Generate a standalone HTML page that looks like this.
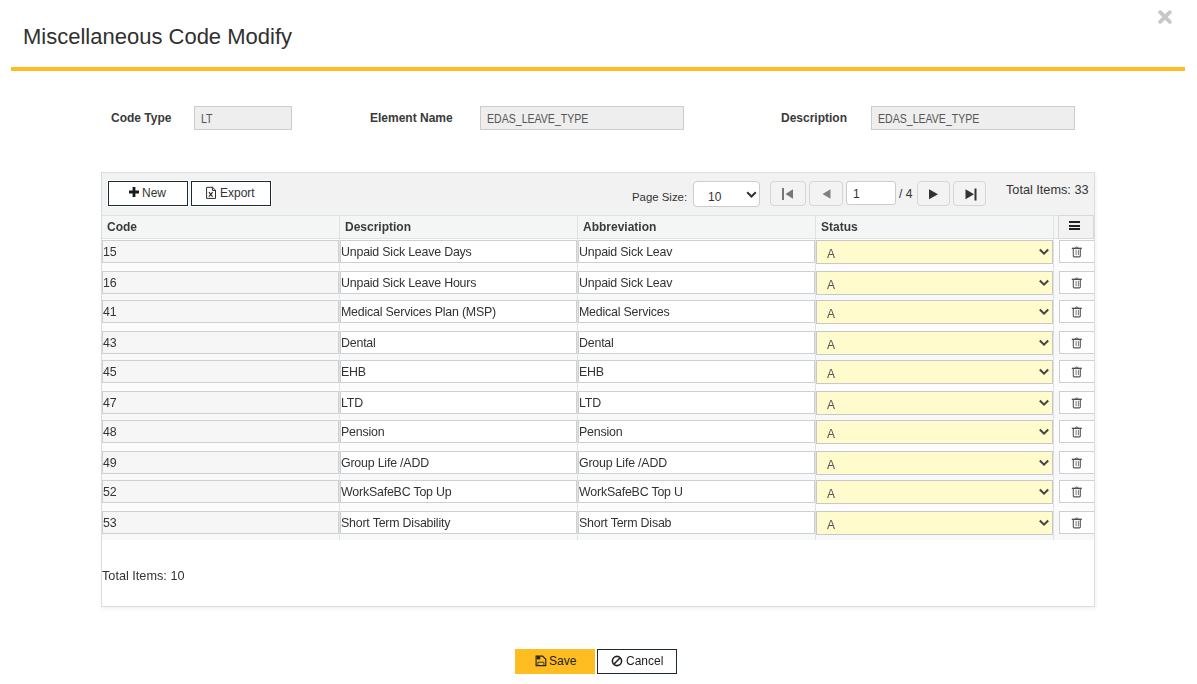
<!DOCTYPE html>
<html><head><meta charset="utf-8">
<style>
*{box-sizing:border-box;margin:0;padding:0}
html,body{width:1197px;height:684px;overflow:hidden;background:#fff;font-family:"Liberation Sans",sans-serif;color:#333}
.a{position:absolute;white-space:nowrap}
.t{line-height:16px;font-size:12px}
.lbl{position:absolute;white-space:nowrap;font-weight:bold;font-size:12px;line-height:16px;color:#3a3a3a}
.inp{position:absolute;background:#eee;border:1px solid #ccc;height:24px}
.inp span{position:absolute;left:6px;top:4px;font-size:12px;line-height:16px;color:#555;transform:scaleX(0.88);transform-origin:0 0}
.btn{position:absolute;border:1px solid #1b2a33;background:#fff;height:25px;box-shadow:0 0 0 1px #fff}
.hdr{position:absolute;top:215px;height:24px;background:#f4f6f6;border-top:1px solid #dce3e5;border-bottom:1px solid #dce3e5}
.sep{position:absolute;width:1px;background:#dce3e5}
.cell{position:absolute;height:23px;border:1px solid #cfcfcf;background:#fff}
.cell span{position:absolute;left:0px;top:4px;font-size:12.4px;line-height:14px;letter-spacing:-0.2px;color:#333}
.code{background:#f6f6f6}
.sel{position:absolute;height:24px;border:1px solid #c8c8c8;background:#fffbcc}
.sel span{position:absolute;left:10px;top:6px;font-size:12px;line-height:14px;color:#555}
.del{position:absolute;height:23px;border:1px solid #cfcfcf;border-right:none;background:#fff}
.pbtn{position:absolute;top:181px;height:25px;border:1px solid #d6d6d6;border-radius:4px;background:#f3f3f3}
.pbtn svg{position:absolute;left:0;top:0}
</style></head><body>
<!-- header -->
<div class="a" style="left:23px;top:24px;font-size:22px;line-height:26px;color:#303030">Miscellaneous Code Modify</div>
<svg class="a" style="left:1158px;top:10px" width="14" height="14" viewBox="0 0 14 14"><path d="M2.2 2.2L11.8 11.8M11.8 2.2L2.2 11.8" stroke="#c8c8c8" stroke-width="3.9" stroke-linecap="round"/></svg>
<div class="a" style="left:11px;top:67px;width:1174px;height:4px;background:#ffbd21"></div>

<!-- form -->
<div class="lbl" style="left:111px;top:110px">Code Type</div>
<div class="inp" style="left:194px;top:106px;width:98px"><span>LT</span></div>
<div class="lbl" style="left:370px;top:110px">Element Name</div>
<div class="inp" style="left:480px;top:106px;width:204px"><span>EDAS_LEAVE_TYPE</span></div>
<div class="lbl" style="left:781px;top:110px">Description</div>
<div class="inp" style="left:871px;top:106px;width:204px"><span>EDAS_LEAVE_TYPE</span></div>

<!-- grid -->
<div class="a" style="left:101px;top:172px;width:994px;height:435px;border:1px solid #d9dfe1;background:#fff;box-shadow:1px 2px 4px rgba(0,0,0,0.06)"></div>
<div class="a" style="left:102px;top:173px;width:992px;height:42px;background:#f2f2f2"></div>
<div class="btn" style="left:108px;top:181px;width:80px"><svg class="a" style="left:20px;top:5px" width="10" height="10" viewBox="0 0 10 10"><path d="M5 0V10M0 5H10" stroke="#1a1a1a" stroke-width="2.8"/></svg><span class="a t" style="left:33px;top:3px;color:#333">New</span></div>
<div class="btn" style="left:191px;top:181px;width:80px"><svg class="a" style="left:14px;top:4px" width="11" height="14" viewBox="0 0 11 14"><path d="M0.6 1.3H6.6L9.5 4.2V12.4H0.6Z" fill="none" stroke="#2a2a2a" stroke-width="1"/><path d="M6.4 1.3V4.4H9.5" fill="none" stroke="#2a2a2a" stroke-width="1"/><path d="M2.9 6.2L6.6 10.6M6.6 6.2L2.9 10.6" stroke="#222" stroke-width="1.1"/></svg><span class="a t" style="left:28px;top:3px;color:#333">Export</span></div>
<div class="a" style="left:632px;top:189px;font-size:11.4px;line-height:16px">Page Size:</div>
<div class="a" style="left:693px;top:181px;width:67px;height:26px;border:1px solid #ccc;border-radius:4px;background:#fff"><span class="a t" style="left:14px;top:7px">10</span><svg class="a" style="left:52px;top:9px" width="11" height="8" viewBox="0 0 11 8"><path d="M1.2 1.2L5.5 5.5L9.8 1.2" fill="none" stroke="#333" stroke-width="2"/></svg></div>
<div class="pbtn" style="left:770px;width:36px"><svg width="36" height="25" viewBox="0 0 36 25"><rect x="11" y="6" width="2" height="12" fill="#777"/><path d="M14.5 12L22 7.2V16.8Z" fill="#777"/></svg></div>
<div class="pbtn" style="left:809px;width:34px"><svg width="34" height="25" viewBox="0 0 34 25"><path d="M12.5 12L20.5 7.2V16.8Z" fill="#808080"/></svg></div>
<div class="a" style="left:846px;top:181px;width:50px;height:24px;border:1px solid #ccc;border-radius:3px;background:#fff"><span class="a t" style="left:6px;top:4px">1</span></div>
<div class="a t" style="left:899px;top:186px">/ 4</div>
<div class="pbtn" style="left:917px;width:33px"><svg width="33" height="25" viewBox="0 0 33 25"><path d="M20 12.2L11 7.2V17.2Z" fill="#333"/></svg></div>
<div class="pbtn" style="left:953px;width:33px"><svg width="33" height="25" viewBox="0 0 33 25"><path d="M20 12.2L11.5 7.2V17.2Z" fill="#333"/><rect x="20.5" y="6.5" width="2" height="12" fill="#333"/></svg></div>
<div class="a" style="left:1006px;top:182px;font-size:12.7px;line-height:16px">Total Items: 33</div>

<div style="position:absolute;left:0;top:0;width:1197px;height:684px;will-change:transform">
<div class="hdr" style="left:102px;width:992px"></div>
<div class="lbl" style="left:107px;top:219px">Code</div>
<div class="lbl" style="left:345px;top:219px">Description</div>
<div class="lbl" style="left:583px;top:219px">Abbreviation</div>
<div class="lbl" style="left:821px;top:219px">Status</div>

<div class="a" style="left:102px;top:240px;width:992px;height:31px;background:#fcfcfc"></div>
<div class="cell code" style="left:102px;top:240px;width:237px"><span>15</span></div>
<div class="cell" style="left:340px;top:240px;width:237px"><span>Unpaid Sick Leave Days</span></div>
<div class="cell" style="left:578px;top:240px;width:237px"><span>Unpaid Sick Leav</span></div>
<div class="sel" style="left:816px;top:240px;width:237px"><span>A</span><svg width="12" height="8" viewBox="0 0 12 8" class="a" style="right:2px;top:7px"><path d="M1.8 1.5L6 5.7L10.2 1.5" fill="none" stroke="#444" stroke-width="2"/></svg></div>
<div class="del" style="left:1059px;top:240px;width:35px"><svg width="12" height="12" viewBox="0 0 12 12" class="a" style="left:11px;top:5px"><path d="M3.9 1.9Q5.7 -0.3 7.5 1.9" fill="#ccc" stroke="#777" stroke-width="0.9"/><path d="M0.8 2.3H10.8" stroke="#3a3a3a" stroke-width="1.2"/><path d="M2.3 2.8V10Q2.3 10.9 3.2 10.9H8.4Q9.3 10.9 9.3 10V2.8" fill="none" stroke="#555" stroke-width="1.1"/><path d="M5.1 3.8V9.2M7.4 3.8V9.2" stroke="#777" stroke-width="1"/></svg></div>
<div class="a" style="left:102px;top:271px;width:992px;height:29px;background:#f6f8fa"></div>
<div class="cell code" style="left:102px;top:271px;width:237px"><span>16</span></div>
<div class="cell" style="left:340px;top:271px;width:237px"><span>Unpaid Sick Leave Hours</span></div>
<div class="cell" style="left:578px;top:271px;width:237px"><span>Unpaid Sick Leav</span></div>
<div class="sel" style="left:816px;top:271px;width:237px"><span>A</span><svg width="12" height="8" viewBox="0 0 12 8" class="a" style="right:2px;top:7px"><path d="M1.8 1.5L6 5.7L10.2 1.5" fill="none" stroke="#444" stroke-width="2"/></svg></div>
<div class="del" style="left:1059px;top:271px;width:35px"><svg width="12" height="12" viewBox="0 0 12 12" class="a" style="left:11px;top:5px"><path d="M3.9 1.9Q5.7 -0.3 7.5 1.9" fill="#ccc" stroke="#777" stroke-width="0.9"/><path d="M0.8 2.3H10.8" stroke="#3a3a3a" stroke-width="1.2"/><path d="M2.3 2.8V10Q2.3 10.9 3.2 10.9H8.4Q9.3 10.9 9.3 10V2.8" fill="none" stroke="#555" stroke-width="1.1"/><path d="M5.1 3.8V9.2M7.4 3.8V9.2" stroke="#777" stroke-width="1"/></svg></div>
<div class="a" style="left:102px;top:300px;width:992px;height:31px;background:#fcfcfc"></div>
<div class="cell code" style="left:102px;top:300px;width:237px"><span>41</span></div>
<div class="cell" style="left:340px;top:300px;width:237px"><span>Medical Services Plan (MSP)</span></div>
<div class="cell" style="left:578px;top:300px;width:237px"><span>Medical Services</span></div>
<div class="sel" style="left:816px;top:300px;width:237px"><span>A</span><svg width="12" height="8" viewBox="0 0 12 8" class="a" style="right:2px;top:7px"><path d="M1.8 1.5L6 5.7L10.2 1.5" fill="none" stroke="#444" stroke-width="2"/></svg></div>
<div class="del" style="left:1059px;top:300px;width:35px"><svg width="12" height="12" viewBox="0 0 12 12" class="a" style="left:11px;top:5px"><path d="M3.9 1.9Q5.7 -0.3 7.5 1.9" fill="#ccc" stroke="#777" stroke-width="0.9"/><path d="M0.8 2.3H10.8" stroke="#3a3a3a" stroke-width="1.2"/><path d="M2.3 2.8V10Q2.3 10.9 3.2 10.9H8.4Q9.3 10.9 9.3 10V2.8" fill="none" stroke="#555" stroke-width="1.1"/><path d="M5.1 3.8V9.2M7.4 3.8V9.2" stroke="#777" stroke-width="1"/></svg></div>
<div class="a" style="left:102px;top:331px;width:992px;height:29px;background:#f6f8fa"></div>
<div class="cell code" style="left:102px;top:331px;width:237px"><span>43</span></div>
<div class="cell" style="left:340px;top:331px;width:237px"><span>Dental</span></div>
<div class="cell" style="left:578px;top:331px;width:237px"><span>Dental</span></div>
<div class="sel" style="left:816px;top:331px;width:237px"><span>A</span><svg width="12" height="8" viewBox="0 0 12 8" class="a" style="right:2px;top:7px"><path d="M1.8 1.5L6 5.7L10.2 1.5" fill="none" stroke="#444" stroke-width="2"/></svg></div>
<div class="del" style="left:1059px;top:331px;width:35px"><svg width="12" height="12" viewBox="0 0 12 12" class="a" style="left:11px;top:5px"><path d="M3.9 1.9Q5.7 -0.3 7.5 1.9" fill="#ccc" stroke="#777" stroke-width="0.9"/><path d="M0.8 2.3H10.8" stroke="#3a3a3a" stroke-width="1.2"/><path d="M2.3 2.8V10Q2.3 10.9 3.2 10.9H8.4Q9.3 10.9 9.3 10V2.8" fill="none" stroke="#555" stroke-width="1.1"/><path d="M5.1 3.8V9.2M7.4 3.8V9.2" stroke="#777" stroke-width="1"/></svg></div>
<div class="a" style="left:102px;top:360px;width:992px;height:31px;background:#fcfcfc"></div>
<div class="cell code" style="left:102px;top:360px;width:237px"><span>45</span></div>
<div class="cell" style="left:340px;top:360px;width:237px"><span>EHB</span></div>
<div class="cell" style="left:578px;top:360px;width:237px"><span>EHB</span></div>
<div class="sel" style="left:816px;top:360px;width:237px"><span>A</span><svg width="12" height="8" viewBox="0 0 12 8" class="a" style="right:2px;top:7px"><path d="M1.8 1.5L6 5.7L10.2 1.5" fill="none" stroke="#444" stroke-width="2"/></svg></div>
<div class="del" style="left:1059px;top:360px;width:35px"><svg width="12" height="12" viewBox="0 0 12 12" class="a" style="left:11px;top:5px"><path d="M3.9 1.9Q5.7 -0.3 7.5 1.9" fill="#ccc" stroke="#777" stroke-width="0.9"/><path d="M0.8 2.3H10.8" stroke="#3a3a3a" stroke-width="1.2"/><path d="M2.3 2.8V10Q2.3 10.9 3.2 10.9H8.4Q9.3 10.9 9.3 10V2.8" fill="none" stroke="#555" stroke-width="1.1"/><path d="M5.1 3.8V9.2M7.4 3.8V9.2" stroke="#777" stroke-width="1"/></svg></div>
<div class="a" style="left:102px;top:391px;width:992px;height:29px;background:#f6f8fa"></div>
<div class="cell code" style="left:102px;top:391px;width:237px"><span>47</span></div>
<div class="cell" style="left:340px;top:391px;width:237px"><span>LTD</span></div>
<div class="cell" style="left:578px;top:391px;width:237px"><span>LTD</span></div>
<div class="sel" style="left:816px;top:391px;width:237px"><span>A</span><svg width="12" height="8" viewBox="0 0 12 8" class="a" style="right:2px;top:7px"><path d="M1.8 1.5L6 5.7L10.2 1.5" fill="none" stroke="#444" stroke-width="2"/></svg></div>
<div class="del" style="left:1059px;top:391px;width:35px"><svg width="12" height="12" viewBox="0 0 12 12" class="a" style="left:11px;top:5px"><path d="M3.9 1.9Q5.7 -0.3 7.5 1.9" fill="#ccc" stroke="#777" stroke-width="0.9"/><path d="M0.8 2.3H10.8" stroke="#3a3a3a" stroke-width="1.2"/><path d="M2.3 2.8V10Q2.3 10.9 3.2 10.9H8.4Q9.3 10.9 9.3 10V2.8" fill="none" stroke="#555" stroke-width="1.1"/><path d="M5.1 3.8V9.2M7.4 3.8V9.2" stroke="#777" stroke-width="1"/></svg></div>
<div class="a" style="left:102px;top:420px;width:992px;height:31px;background:#fcfcfc"></div>
<div class="cell code" style="left:102px;top:420px;width:237px"><span>48</span></div>
<div class="cell" style="left:340px;top:420px;width:237px"><span>Pension</span></div>
<div class="cell" style="left:578px;top:420px;width:237px"><span>Pension</span></div>
<div class="sel" style="left:816px;top:420px;width:237px"><span>A</span><svg width="12" height="8" viewBox="0 0 12 8" class="a" style="right:2px;top:7px"><path d="M1.8 1.5L6 5.7L10.2 1.5" fill="none" stroke="#444" stroke-width="2"/></svg></div>
<div class="del" style="left:1059px;top:420px;width:35px"><svg width="12" height="12" viewBox="0 0 12 12" class="a" style="left:11px;top:5px"><path d="M3.9 1.9Q5.7 -0.3 7.5 1.9" fill="#ccc" stroke="#777" stroke-width="0.9"/><path d="M0.8 2.3H10.8" stroke="#3a3a3a" stroke-width="1.2"/><path d="M2.3 2.8V10Q2.3 10.9 3.2 10.9H8.4Q9.3 10.9 9.3 10V2.8" fill="none" stroke="#555" stroke-width="1.1"/><path d="M5.1 3.8V9.2M7.4 3.8V9.2" stroke="#777" stroke-width="1"/></svg></div>
<div class="a" style="left:102px;top:451px;width:992px;height:29px;background:#f6f8fa"></div>
<div class="cell code" style="left:102px;top:451px;width:237px"><span>49</span></div>
<div class="cell" style="left:340px;top:451px;width:237px"><span>Group Life /ADD</span></div>
<div class="cell" style="left:578px;top:451px;width:237px"><span>Group Life /ADD</span></div>
<div class="sel" style="left:816px;top:451px;width:237px"><span>A</span><svg width="12" height="8" viewBox="0 0 12 8" class="a" style="right:2px;top:7px"><path d="M1.8 1.5L6 5.7L10.2 1.5" fill="none" stroke="#444" stroke-width="2"/></svg></div>
<div class="del" style="left:1059px;top:451px;width:35px"><svg width="12" height="12" viewBox="0 0 12 12" class="a" style="left:11px;top:5px"><path d="M3.9 1.9Q5.7 -0.3 7.5 1.9" fill="#ccc" stroke="#777" stroke-width="0.9"/><path d="M0.8 2.3H10.8" stroke="#3a3a3a" stroke-width="1.2"/><path d="M2.3 2.8V10Q2.3 10.9 3.2 10.9H8.4Q9.3 10.9 9.3 10V2.8" fill="none" stroke="#555" stroke-width="1.1"/><path d="M5.1 3.8V9.2M7.4 3.8V9.2" stroke="#777" stroke-width="1"/></svg></div>
<div class="a" style="left:102px;top:480px;width:992px;height:31px;background:#fcfcfc"></div>
<div class="cell code" style="left:102px;top:480px;width:237px"><span>52</span></div>
<div class="cell" style="left:340px;top:480px;width:237px"><span>WorkSafeBC Top Up</span></div>
<div class="cell" style="left:578px;top:480px;width:237px"><span>WorkSafeBC Top U</span></div>
<div class="sel" style="left:816px;top:480px;width:237px"><span>A</span><svg width="12" height="8" viewBox="0 0 12 8" class="a" style="right:2px;top:7px"><path d="M1.8 1.5L6 5.7L10.2 1.5" fill="none" stroke="#444" stroke-width="2"/></svg></div>
<div class="del" style="left:1059px;top:480px;width:35px"><svg width="12" height="12" viewBox="0 0 12 12" class="a" style="left:11px;top:5px"><path d="M3.9 1.9Q5.7 -0.3 7.5 1.9" fill="#ccc" stroke="#777" stroke-width="0.9"/><path d="M0.8 2.3H10.8" stroke="#3a3a3a" stroke-width="1.2"/><path d="M2.3 2.8V10Q2.3 10.9 3.2 10.9H8.4Q9.3 10.9 9.3 10V2.8" fill="none" stroke="#555" stroke-width="1.1"/><path d="M5.1 3.8V9.2M7.4 3.8V9.2" stroke="#777" stroke-width="1"/></svg></div>
<div class="a" style="left:102px;top:511px;width:992px;height:29px;background:#f6f8fa"></div>
<div class="cell code" style="left:102px;top:511px;width:237px"><span>53</span></div>
<div class="cell" style="left:340px;top:511px;width:237px"><span>Short Term Disability</span></div>
<div class="cell" style="left:578px;top:511px;width:237px"><span>Short Term Disab</span></div>
<div class="sel" style="left:816px;top:511px;width:237px"><span>A</span><svg width="12" height="8" viewBox="0 0 12 8" class="a" style="right:2px;top:7px"><path d="M1.8 1.5L6 5.7L10.2 1.5" fill="none" stroke="#444" stroke-width="2"/></svg></div>
<div class="del" style="left:1059px;top:511px;width:35px"><svg width="12" height="12" viewBox="0 0 12 12" class="a" style="left:11px;top:5px"><path d="M3.9 1.9Q5.7 -0.3 7.5 1.9" fill="#ccc" stroke="#777" stroke-width="0.9"/><path d="M0.8 2.3H10.8" stroke="#3a3a3a" stroke-width="1.2"/><path d="M2.3 2.8V10Q2.3 10.9 3.2 10.9H8.4Q9.3 10.9 9.3 10V2.8" fill="none" stroke="#555" stroke-width="1.1"/><path d="M5.1 3.8V9.2M7.4 3.8V9.2" stroke="#777" stroke-width="1"/></svg></div>
<div class="sep" style="left:339px;top:216px;height:324px"></div>
<div class="sep" style="left:577px;top:216px;height:324px"></div>
<div class="sep" style="left:815px;top:216px;height:324px"></div>
<div class="sep" style="left:1053px;top:216px;height:324px"></div>
<div class="a" style="left:1058px;top:215px;width:36px;height:24px;border:1px solid #d5d9db;background:#f2f2f2"><svg class="a" style="left:10px;top:5px" width="12" height="11" viewBox="0 0 12 11"><rect x="0" y="0" width="11" height="2" fill="#222"/><rect x="0" y="4" width="11" height="2" fill="#222"/><rect x="0" y="7" width="11" height="2" fill="#222"/></svg></div>
<div class="a" style="left:102px;top:568px;font-size:12.7px;line-height:16px">Total Items: 10</div>
</div>

<!-- footer -->
<div class="a" style="left:515px;top:649px;width:80px;height:25px;background:#ffbd21"><svg class="a" style="left:20px;top:6px" width="12" height="12" viewBox="0 0 12 12"><path d="M1.1 1.1H7.6L10.8 4.3V10.6H1.1Z" fill="none" stroke="#222" stroke-width="1.1"/><rect x="1.8" y="1.4" width="3.4" height="3" fill="#222"/><path d="M2.9 10.5V7.2H8.9V10.5" fill="none" stroke="#3a3a22" stroke-width="1"/></svg><span class="a t" style="left:34px;top:4px;color:#222">Save</span></div>
<div class="a" style="left:597px;top:649px;width:80px;height:25px;border:1px solid #1b2a33;background:#fff;box-shadow:0 0 0 1px #fff"><svg class="a" style="left:13px;top:5px" width="12" height="12" viewBox="0 0 12 12"><circle cx="6" cy="6" r="4.6" fill="none" stroke="#222" stroke-width="1.6"/><path d="M9.2 2.8L2.8 9.2" stroke="#222" stroke-width="1.6"/></svg><span class="a t" style="left:28px;top:3px;color:#222">Cancel</span></div>
</body></html>
